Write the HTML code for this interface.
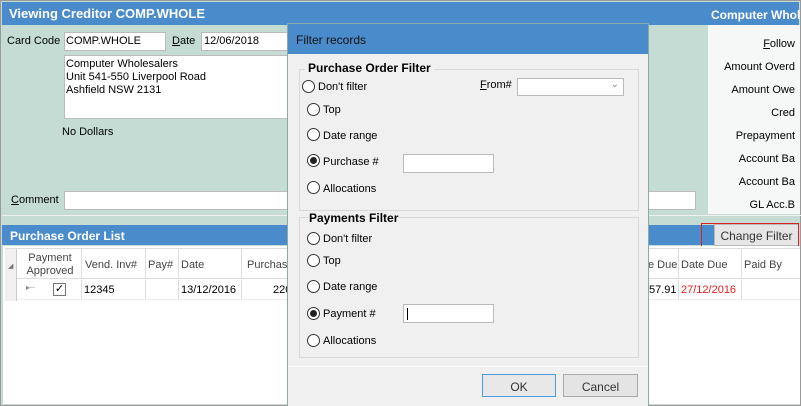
<!DOCTYPE html>
<html><head><meta charset="utf-8"><style>
*{margin:0;padding:0;box-sizing:border-box}
body{width:801px;height:406px;overflow:hidden;position:relative;background:#c4dcd4;font-family:"Liberation Sans",sans-serif;font-size:11px;color:#000}
.a{position:absolute;white-space:nowrap}
.inp{position:absolute;background:#fff;border:1px solid #bbb}
.bar{position:absolute;background:#4a8ccb;color:#fff;font-weight:bold}
.r{position:absolute;width:13px;height:13px;border:1px solid #333;border-radius:50%;background:#fff;margin-top:-2px}
.r.on::after{content:"";position:absolute;left:2px;top:2px;width:7px;height:7px;border-radius:50%;background:#222}
.grp{position:absolute;border:1px solid #d8d8d8}
.col{position:absolute;top:0;height:100%;border-left:1px solid #ddd}
</style></head><body>
<div style="position:absolute;left:0;top:0;width:801px;height:406px;border:1px solid #999"></div>
<div class="bar" style="left:2px;top:2px;width:797px;height:23px;font-size:13px;padding:4px 0 0 7px">Viewing Creditor COMP.WHOLE</div>
<div class="a" style="left:711px;top:8px;color:#fff;font-weight:bold;font-size:12px">Computer Whol</div>
<div class="a" style="left:7px;top:35px;font-size:11px">Card Code</div>
<div class="inp" style="left:64px;top:32px;width:102px;height:19px;padding:2px 1px;font-size:11px">COMP.WHOLE</div>
<div class="a" style="left:172px;top:35px;font-size:11px"><u>D</u>ate</div>
<div class="inp" style="left:201px;top:32px;width:90px;height:19px;padding:2px 2px;font-size:11px">12/06/2018</div>
<div class="inp" style="left:64px;top:55px;width:230px;height:64px;padding:2px 1px;line-height:13px;font-size:11px">Computer Wholesalers<br>Unit 541-550 Liverpool Road<br>Ashfield NSW 2131</div>
<div class="a" style="left:62px;top:126px;font-size:11px">No Dollars</div>
<div class="a" style="left:11px;top:194px;font-size:11px"><u>C</u>omment</div>
<div class="inp" style="left:64px;top:191px;width:632px;height:19px"></div>
<div style="position:absolute;left:708px;top:25px;width:92px;height:189px;background:#f6f8f7"></div>
<div class="a" style="right:6px;top:33px;text-align:right;line-height:23px;font-size:11px">
<u>F</u>ollow<br>Amount Overd<br>Amount Owe<br>Cred<br>Prepayment<br>Account Ba<br>Account Ba<br>GL Acc.B</div>
<div style="position:absolute;left:2px;top:215px;width:799px;height:1px;background:#f0f0f0"></div>
<div class="bar" style="left:2px;top:225px;width:797px;height:20px;font-size:12px;padding:4px 0 0 8px">Purchase Order List</div>
<div class="a" style="left:714px;top:224px;width:85px;height:22px;background:#e6e6e6;border:1px solid #bbb;text-align:center;padding-top:4px;font-size:12px;color:#333">Change Filter</div>
<div style="position:absolute;left:701px;top:223px;width:98px;height:28px;border:1px solid #e02020"></div>
<div style="position:absolute;left:3px;top:246px;width:797px;height:158px;background:#fff"></div>
<div style="position:absolute;left:5px;top:248px;width:795px;height:31px;background:#fff;border-bottom:1px solid #ddd;border-top:1px solid #ddd">
<div style="position:absolute;left:0;top:0;width:12px;height:52px;background:#f0f0f0;border-right:1px solid #ccc"></div>
<div class="col" style="left:76px"></div><div class="col" style="left:140px"></div><div class="col" style="left:173px"></div><div class="col" style="left:236px"></div><div class="col" style="left:673px"></div><div class="col" style="left:736px"></div>
<div class="a" style="left:3px;top:13px;font-size:7px;color:#777">◢</div>
<div class="a" style="left:16px;top:3px;width:58px;text-align:center;line-height:13px;color:#444">Payment<br>Approved</div>
<div class="a" style="left:80px;top:10px;color:#444">Vend. Inv#</div>
<div class="a" style="left:143px;top:10px;color:#444">Pay#</div>
<div class="a" style="left:176px;top:10px;color:#444">Date</div>
<div class="a" style="left:242px;top:10px;color:#444">Purchase</div>
<div class="a" style="left:643px;top:10px;color:#444">e Due</div>
<div class="a" style="left:676px;top:10px;color:#444">Date Due</div>
<div class="a" style="left:739px;top:10px;color:#444">Paid By</div>
</div>
<div style="position:absolute;left:17px;top:280px;width:783px;height:20px;border-bottom:1px solid #eee">
<div class="col" style="left:64px"></div><div class="col" style="left:128px"></div><div class="col" style="left:161px"></div><div class="col" style="left:224px"></div><div class="col" style="left:661px"></div><div class="col" style="left:724px"></div>
<div class="a" style="left:9px;top:3px;font-size:8px;color:#888">▸┈</div>
<div style="position:absolute;left:36px;top:3px;width:13px;height:13px;border:1px solid #777;font-size:11px;line-height:11px;text-align:center">✓</div>
<div class="a" style="left:67px;top:4px">12345</div>
<div class="a" style="left:164px;top:4px">13/12/2016</div>
<div class="a" style="left:256px;top:4px">220</div>
<div class="a" style="left:632px;top:4px">57.91</div>
<div class="a" style="left:664px;top:4px;color:#e02020">27/12/2016</div>
</div>
<!-- dialog -->
<div style="position:absolute;left:287px;top:23px;width:362px;height:383px;background:#f0f0f0;border:1px solid #8aa;border-bottom:none">
<div style="position:absolute;left:0;top:0;width:360px;height:30px;background:#4a8ccb;color:#111;font-size:12px;padding:9px 0 0 8px">Filter records</div>
<div class="grp" style="left:11px;top:45px;width:340px;height:142px"></div>
<div class="a" style="left:17px;top:37px;font-weight:bold;font-size:12px;background:#f0f0f0;padding:0 3px">Purchase Order Filter</div>
<div class="r" style="left:14px;top:58px"></div><div class="a" style="left:30px;top:57px">Don't filter</div>
<div class="r" style="left:19px;top:81px"></div><div class="a" style="left:35px;top:80px">Top</div>
<div class="r" style="left:19px;top:106px"></div><div class="a" style="left:35px;top:106px">Date range</div>
<div class="r on" style="left:19px;top:132px"></div><div class="a" style="left:35px;top:132px">Purchase #</div>
<div class="inp" style="left:115px;top:130px;width:91px;height:19px"></div>
<div class="r" style="left:19px;top:159px"></div><div class="a" style="left:35px;top:159px">Allocations</div>
<div class="a" style="left:192px;top:55px"><u>F</u>rom#</div>
<div class="inp" style="left:229px;top:54px;width:107px;height:18px;color:#888;font-size:10px;text-align:right;padding-right:4px">&#8964;</div>
<div class="grp" style="left:11px;top:193px;width:340px;height:141px"></div>
<div class="a" style="left:20px;top:187px;font-weight:bold;font-size:12px;background:#f0f0f0;padding:0 1px">Payments Filter</div>
<div class="r" style="left:19px;top:210px"></div><div class="a" style="left:35px;top:209px">Don't filter</div>
<div class="r" style="left:19px;top:232px"></div><div class="a" style="left:35px;top:231px">Top</div>
<div class="r" style="left:19px;top:258px"></div><div class="a" style="left:35px;top:257px">Date range</div>
<div class="r on" style="left:19px;top:285px"></div><div class="a" style="left:35px;top:284px">Payment #</div>
<div class="inp" style="left:115px;top:280px;width:91px;height:19px"><div style="position:absolute;left:3px;top:3px;width:1px;height:12px;background:#000"></div></div>
<div class="r" style="left:19px;top:312px"></div><div class="a" style="left:35px;top:311px">Allocations</div>
<div style="position:absolute;left:0;top:342px;width:360px;height:1px;background:#fff"></div>
<div class="a" style="left:194px;top:350px;width:74px;height:23px;border:1px solid #4a9be0;background:#e8e8e8;text-align:center;padding-top:5px;font-size:12px;color:#333">OK</div>
<div class="a" style="left:275px;top:350px;width:75px;height:23px;border:1px solid #aaa;background:#e4e4e4;text-align:center;padding-top:5px;font-size:12px;color:#333">Cancel</div>
</div>
</body></html>
